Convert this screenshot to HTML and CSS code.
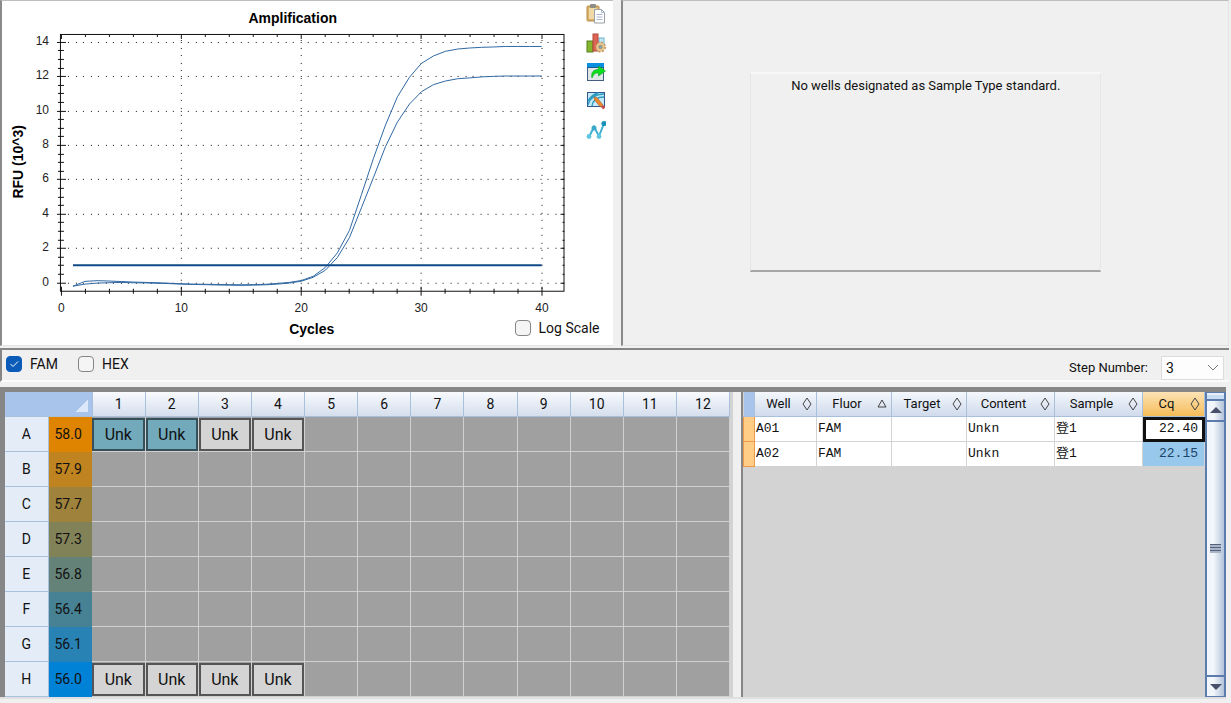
FILE: index.html
```
<!DOCTYPE html>
<html lang="en">

<head>
    <meta charset="UTF-8">
    <meta name="viewport" content="width=device-width, initial-scale=1.0">
    <title>Amplification</title>
    <link rel="stylesheet" href="styles.css">
</head>

<body>
    <div class="top">
        <div class="panel chart-panel">
            <svg class="chart" id="chart" viewBox="2 1 578 344"></svg>
            <div class="tools">
                <button title="Copy">
                    <svg viewBox="0 0 20 20">
                        <rect x="1" y="2" width="12" height="15" rx="1" fill="#d9b26a" stroke="#b88d48" />
                        <rect x="3" y="4" width="8" height="11" fill="#f0d9a6" />
                        <rect x="4" y="0" width="6" height="4" rx="1" fill="#8d8d86" />
                        <path d="M8.500 5.500h7l3 3v10.500h-10z" fill="#fff" stroke="#9a9fa6" />
                        <path d="M15.500 5.500v3h3M10.500 10.500h6M10.500 13h6M10.500 15.500h6" fill="none" stroke="#a9b8cf" />
                    </svg>
                </button>
                <button title="Chart settings">
                    <svg viewBox="0 0 20 20">
                        <rect x="13" y="5" width="5" height="10" fill="#bfe8f4" stroke="#6fb4cc" />
                        <rect x="1" y="8" width="6" height="11" fill="#84b52a" stroke="#55801a" />
                        <rect x="7" y="1" width="5" height="17" fill="#dc6455" stroke="#b8473d" />
                        <circle cx="14.500" cy="14" r="4.500" fill="#e2bd88" stroke="#c49458" stroke-width="2" stroke-dasharray="2 1.500" />
                        <circle cx="14.500" cy="14" r="4" fill="#e8c796" />
                        <circle cx="14.500" cy="14" r="1.800" fill="#7ba5b8" stroke="#b08a58" stroke-width="0.800" />
                    </svg>
                </button>
                <button title="Export">
                    <svg viewBox="0 0 20 20">
                        <rect x="1.500" y="1.500" width="16" height="17" fill="#dfe6e8" stroke="#435f80" />
                        <rect x="1" y="1" width="17" height="4" fill="#0a8fe0" />
                        <path d="M1 5.500h17" stroke="#1d5a94" />
                        <path d="M6 16c-1.500-6 2-8.500 6.500-8.500v-3.500l7 5-7 5v-3c-3.500-.5-5 1.500-6.500 5z" fill="#0be01c" stroke="#0b9d20" stroke-width="0.600" />
                    </svg>
                </button>
                <button title="Edit style">
                    <svg viewBox="0 0 20 20">
                        <rect x="1.500" y="1.500" width="17" height="14" fill="#c5eaf6" stroke="#30588c" />
                        <path d="M2 14c2-8 7-11 16-11M2 10c3-5 6-7 10-8M6 15c1-6 5-9 12-9" fill="none" stroke="#2c9cc0" stroke-width="1.300" />
                        <path d="M8 6l3 .7 6 7.300-2.500 2-6-7z" fill="#ee8a2c" stroke="#a75420" stroke-width="0.600" />
                        <path d="M15 16l2.200-2 2 2.500-2 2z" fill="#c74c4a" />
                    </svg>
                </button>
                <button title="Select trace">
                    <svg viewBox="0 0 20 20">
                        <path d="M3 17l5-10 5 9 5-12.500" fill="none" stroke="#3fb0cf" stroke-width="2" />
                        <circle cx="3" cy="16.500" r="2.400" fill="#5fc6de" />
                        <circle cx="8" cy="8" r="2.500" fill="#3aa8c8" />
                        <circle cx="13" cy="16.500" r="2.400" fill="#5fc6de" />
                        <circle cx="18" cy="3.500" r="2.600" fill="#1792b8" />
                    </svg>
                </button>
            </div>
            <label class="check log-scale"><input type="checkbox"> Log Scale</label>
        </div>
        <div class="panel standard-panel">
            <div class="message">No wells designated as Sample Type standard.</div>
        </div>
    </div>

    <div class="bar">
        <label class="check"><input type="checkbox" checked> FAM</label>
        <label class="check"><input type="checkbox"> HEX</label>
        <div class="step">
            <label for="step">Step Number:</label>
            <select id="step">
                <option>1</option>
                <option>2</option>
                <option selected>3</option>
            </select>
        </div>
    </div>

    <div class="bottom">
        <div class="plate-panel">
            <table class="plate" id="plate"></table>
        </div>
        <div class="results-panel">
            <div class="results-wrap">
                <table class="results">
                    <colgroup>
                        <col class="c-mark">
                        <col class="c-well">
                        <col class="c-mid">
                        <col class="c-mid">
                        <col class="c-wide">
                        <col class="c-wide">
                        <col class="c-well">
                    </colgroup>
                    <thead>
                        <tr>
                            <th class="corner"></th>
                            <th><div><span>Well</span> <svg viewBox="0 0 10 14"><path d="M5 1l4 6-4 6-4-6z" /></svg></div></th>
                            <th><div><span>Fluor</span> <svg viewBox="0 0 10 14"><path d="M5 3l4 7h-8z" /></svg></div></th>
                            <th><div><span>Target</span> <svg viewBox="0 0 10 14"><path d="M5 1l4 6-4 6-4-6z" /></svg></div></th>
                            <th><div><span>Content</span> <svg viewBox="0 0 10 14"><path d="M5 1l4 6-4 6-4-6z" /></svg></div></th>
                            <th><div><span>Sample</span> <svg viewBox="0 0 10 14"><path d="M5 1l4 6-4 6-4-6z" /></svg></div></th>
                            <th class="sorted"><div><span>Cq</span> <svg viewBox="0 0 10 14"><path d="M5 1l4 6-4 6-4-6z" /></svg></div></th>
                        </tr>
                    </thead>
                    <tbody>
                        <tr>
                            <td class="mark"></td>
                            <td>A01</td>
                            <td>FAM</td>
                            <td></td>
                            <td>Unkn</td>
                            <td>登1</td>
                            <td class="num current">22.40</td>
                        </tr>
                        <tr>
                            <td class="mark"></td>
                            <td>A02</td>
                            <td>FAM</td>
                            <td></td>
                            <td>Unkn</td>
                            <td>登1</td>
                            <td class="num selected">22.15</td>
                        </tr>
                    </tbody>
                </table>
            </div>
            <div class="scrollbar">
                <div class="split"></div>
                <button title="Up"><svg viewBox="0 0 12 6"><path d="M6 0l6 6h-12z" /></svg></button>
                <div class="thumb"><span class="grip"></span></div>
                <button title="Down"><svg viewBox="0 0 12 6"><path d="M0 0h12l-6 6z" /></svg></button>
            </div>
        </div>
    </div>

    <script>
        // ---- amplification chart ----
        const upper = [-0.2, 0.08, 0.12, 0.1, 0.07, 0.04, 0.02, 0, -0.03, -0.06, -0.08, -0.09, -0.1, -0.11, -0.12, -0.11, -0.09, -0.04, 0.02, 0.13,
            0.38, 0.89, 1.74, 3.04, 5.12, 7.24, 9.17, 10.83, 11.96, 12.77, 13.2, 13.47, 13.6, 13.66, 13.7, 13.72, 13.75, 13.75, 13.75, 13.75];
        const lower = [-0.2, -0.08, -0.02, 0, 0.02, 0, -0.01, -0.03, -0.05, -0.08, -0.1, -0.11, -0.13, -0.14, -0.15, -0.14, -0.12, -0.08, -0.02, 0.09,
            0.32, 0.73, 1.47, 2.62, 4.36, 6.12, 7.92, 9.36, 10.4, 11.12, 11.53, 11.74, 11.87, 11.92, 11.98, 12.01, 12.03, 12.03, 12.03, 12.03];

        const left = 61, right = 565, top_ = 35, bottom_ = 291;
        const px = (cycle) => left + cycle * 12.03;
        const py = (rfu) => 283 - rfu * 17.2;
        const snap = (n) => Math.floor(n) + 0.5;

        const line = (x1, y1, x2, y2, cls) => `<line class="${cls}" x1="${x1}" y1="${y1}" x2="${x2}" y2="${y2}"/>`;
        const label = (x, y, text, cls) => `<text class="${cls}" x="${x}" y="${y}">${text}</text>`;
        const curve = (data) => `<polyline class="trace" points="${data.map((v, i) => px(i + 1) + ',' + py(v)).join(' ')}"/>`;

        let svg = '';
        for (let v = 0; v <= 14; v += 0.5) {
            const y = snap(py(v));
            if (v % 2 === 0) {
                svg += line(left + 7, y, right, y, 'grid');
                svg += line(left - 4, y, left + 5, y, 'axis') + line(right - 4, y, right, y, 'axis');
                svg += label(49, y + 3, v, 'tick-y');
            } else {
                svg += line(left - 3, y, left + 3, y, 'axis') + line(right - 2, y, right, y, 'axis');
            }
        }
        for (let c = 0; c <= 40; c += 2) {
            const x = snap(px(c));
            if (c % 10 === 0) {
                if (c > 0) svg += line(x, top_ + 5, x, bottom_, 'grid');
                svg += line(x, bottom_ - 4, x, bottom_ + 5, 'axis') + line(x, top_, x, top_ + 4, 'axis');
                svg += label(x, 312, c, 'tick-x');
            } else {
                svg += line(x, bottom_ - 2, x, bottom_ + 3, 'axis') + line(x, top_, x, top_ + 2, 'axis');
            }
        }
        svg += `<rect class="frame" x="${left - 0.5}" y="${top_ - 0.5}" width="${right - left}" height="${bottom_ - top_ + 1}"/>`;
        svg += curve(upper) + curve(lower);
        svg += line(px(1), 265.5, px(40), 265.5, 'threshold');
        svg += label(293, 23, 'Amplification', 'title');
        svg += label(312, 334, 'Cycles', 'title');
        svg += `<text class="title" transform="translate(23 162) rotate(-90)">RFU (10^3)</text>`;
        document.getElementById('chart').innerHTML = svg;

        // ---- plate ----
        const rows = [
            ['A', '58.0', '#df8400'],
            ['B', '57.9', '#bf8320'],
            ['C', '57.7', '#9f823c'],
            ['D', '57.3', '#828259'],
            ['E', '56.8', '#648277'],
            ['F', '56.4', '#478294'],
            ['G', '56.1', '#2982b4'],
            ['H', '56.0', '#0082d6']
        ];
        const selected = ['A1', 'A2'];

        let plate = '<colgroup><col class="c-row"><col class="c-temp"><col span="12"></colgroup><thead><tr><th colspan="2" class="corner"></th>';
        for (let c = 1; c <= 12; c++) plate += `<th>${c}</th>`;
        plate += '</tr></thead><tbody>';
        rows.forEach(([name, temp, color]) => {
            plate += `<tr><th>${name}</th><td class="temp" style="background-color:${color}">${temp}</td>`;
            for (let c = 1; c <= 12; c++) {
                const used = (name === 'A' || name === 'H') && c <= 4;
                const cls = selected.includes(name + c) ? 'well on' : 'well';
                plate += used ? `<td><div class="${cls}">Unk</div></td>` : '<td></td>';
            }
            plate += '</tr>';
        });
        document.getElementById('plate').innerHTML = plate + '</tbody>';
    </script>
</body>

</html>
```
FILE: styles.css
```
* {
    box-sizing: border-box;
}

body {
    margin: 0;
    background-color: #f0f0f0;
    font-family: Roboto, "Liberation Sans", sans-serif;
    font-size: 14px;
    color: #111;
}

button {
    border: none;
    padding: 0;
    background: none;
    cursor: pointer;
}

/* Top */
.top {
    display: flex;
    gap: 8px;
    padding-right: 2px;
}

.panel {
    border-top: 1px solid #bdbdbd;
    border-left: 2px solid #8a8a8a;
    border-bottom: 1px solid #e3e3e3;
}

.chart-panel {
    position: relative;
    flex: 614;
    display: flex;
    background-color: #fff;
}

.chart {
    flex: 1;
    min-width: 0;
}

.tools {
    width: 34px;
    padding: 3px 0 0 7px;
    display: flex;
    flex-direction: column;
    gap: 9px;
}

.tools button,
.tools svg {
    display: block;
    width: 20px;
    height: 20px;
}

.log-scale {
    position: absolute;
    right: 14px;
    bottom: 9px;
}

.standard-panel {
    flex: 607;
    display: flex;
    justify-content: center;
    align-items: flex-start;
    padding-top: 71px;
    border-right: 1px solid #e3e3e3;
}

.message {
    width: 58%;
    height: 200px;
    padding-top: 3px;
    text-align: center;
    font-size: 13px;
    line-height: 18px;
    border: 1px solid #e6e6e6;
    border-top: 2px solid #f8f8f8;
    border-bottom: 2px solid #a6a6a6;
}

/* Chart */
.axis,
.frame,
.grid {
    fill: none;
    stroke: #111;
    stroke-width: 1;
}

.grid {
    stroke-dasharray: 1 7 1 6;
}

.trace {
    fill: none;
    stroke: #2f67a3;
    stroke-width: 1;
}

.threshold {
    stroke: #0f4a86;
    stroke-width: 2;
}

.chart text {
    font-family: "Liberation Sans", sans-serif;
    font-size: 12px;
    fill: #222;
    text-anchor: middle;
}

.chart .tick-y {
    text-anchor: end;
}

.chart .title {
    font-size: 14px;
    font-weight: bold;
    fill: #000;
}

/* Channel bar */
.check {
    display: flex;
    align-items: center;
    gap: 8px;
}

.check input {
    appearance: none;
    width: 16px;
    height: 16px;
    margin: 0;
    border: 1px solid #858585;
    border-radius: 4px;
    background-color: #f5f5f5;
}

.check input:checked {
    border-color: #0a5cb8;
    background: #0a5cb8 url("data:image/svg+xml,%3Csvg xmlns='http://www.w3.org/2000/svg' viewBox='0 0 14 14'%3E%3Cpath d='M3.500 7l2.500 2.500 5-5' fill='none' stroke='white'/%3E%3C/svg%3E");
}

.bar {
    display: flex;
    align-items: flex-start;
    gap: 20px;
    height: 34px;
    margin: 2px 2px 0 0;
    padding: 6px 5px 0 4px;
    border-top: 2px solid #868686;
    border-left: 2px solid #868686;
    border-bottom: 2px solid #fbfbfb;
}

.step {
    display: flex;
    align-items: center;
    gap: 13px;
    margin-left: auto;
    height: 24px;
    font-size: 13px;
}

.step select {
    appearance: none;
    width: 63px;
    height: 24px;
    padding: 0 4px;
    border: 1px solid #dcdcdc;
    border-radius: 0;
    font: inherit;
    font-size: 14px;
    color: inherit;
    background: #fdfdfd url("data:image/svg+xml,%3Csvg xmlns='http://www.w3.org/2000/svg' viewBox='0 0 12 8'%3E%3Cpath d='M1 1l5 5 5-5' fill='none' stroke='%23777'/%3E%3C/svg%3E") no-repeat right 4px center / 12px 8px;
}

/* Bottom */
.bottom {
    display: flex;
    gap: 8px;
    margin: 5px 5px 0 0;
    border-top: 5px solid #868686;
    border-bottom: 2px solid #e0e0e0;
}

.plate-panel {
    flex: 728;
    border-left: 5px solid #868686;
    padding-right: 3px;
    background-color: #d3d3d3;
}

.plate {
    width: 100%;
    table-layout: fixed;
    border-collapse: collapse;
}

.c-row {
    width: 43px;
}

.c-temp {
    width: 44px;
}

.plate th {
    height: 35px;
    padding: 0;
    font-weight: normal;
    background-color: #e4ecf8;
    border-right: 1px solid #a9c0dc;
    border-bottom: 1px solid #a9c0dc;
}

.plate thead th {
    height: 25px;
    background-image: linear-gradient(#f8fafd, #d5deed);
}

.plate thead .corner {
    background: linear-gradient(135deg, transparent 50%, #dce8fa 50%) no-repeat right 4px bottom 4px / 13px 13px #a9c4ea;
}

.plate td {
    height: 35px;
    padding: 0;
    text-align: center;
    background-color: #a0a0a0;
    border-right: 1px solid #d0d0d0;
    border-bottom: 1px solid #d0d0d0;
}

.plate .temp {
    border: none;
    text-align: left;
    padding-left: 6px;
}

.well {
    height: 33px;
    line-height: 29px;
    font-size: 16px;
    border: 2px solid #555;
    background-color: #d4d4d4;
}

.well.on {
    background-color: #72aabc;
    border-color: #35505a;
}

.results-panel {
    flex: 485;
    display: flex;
    border-left: 2px solid #868686;
    background-color: #d3d3d3;
}

.results-wrap {
    flex: 1;
}

.results {
    width: 100%;
    table-layout: fixed;
    border-collapse: collapse;
}

.c-mark {
    width: 11px;
}

.c-well {
    width: 62px;
}

.c-mid {
    width: 75px;
}

.results th {
    height: 25px;
    padding: 0;
    font-size: 13px;
    font-weight: normal;
    background: linear-gradient(#f4f7fc, #cfdaeb);
    border-right: 1px solid #a9c0dc;
    border-bottom: 1px solid #a9c0dc;
}

.results .corner {
    background: #a9c4ea;
}

.results .sorted {
    background: linear-gradient(#fce3b6, #f5bc58);
}

.results th div {
    display: flex;
    align-items: center;
    padding: 0 4px 0 0;
}

.results th span {
    flex: 1;
    text-align: center;
}

.results svg {
    width: 10px;
    height: 14px;
    fill: none;
    stroke: #444;
}

.results td {
    height: 25px;
    padding: 0 1px;
    font-family: "Liberation Mono", "Noto Sans CJK SC", monospace;
    font-size: 13px;
    line-height: 20px;
    background-color: #fff;
    border-right: 1px solid #d3d3d3;
    border-bottom: 1px solid #d3d3d3;
}

.results .mark {
    background-color: #ffcd85;
    border: 1px solid #ee9a4a;
}

.results .num {
    padding-right: 6px;
    text-align: right;
}

.results .current {
    outline: 3px solid #111;
    outline-offset: -3px;
}

.results .selected {
    background-color: #98c8ec;
    color: #1b4468;
}

.scrollbar {
    display: flex;
    flex-direction: column;
    width: 21px;
    background-color: #5c7cae;
    padding: 1px 2px;
    gap: 2px;
}

.scrollbar .split {
    height: 6px;
    background-color: #c8dcf3;
    border-top: 2px solid #e6f0fb;
}

.scrollbar button,
.scrollbar .thumb {
    display: flex;
    align-items: center;
    justify-content: center;
    height: 19px;
    background: linear-gradient(to right, #f2f5f9 40%, #b3c3da);
}

.scrollbar .thumb {
    flex: 1;
}

.scrollbar svg {
    width: 12px;
    height: 6px;
    fill: #474f6b;
}

.grip {
    width: 11px;
    height: 9px;
    background: repeating-linear-gradient(#56607c 0 1px, #a9b4c6 1px 3px);
}
```
